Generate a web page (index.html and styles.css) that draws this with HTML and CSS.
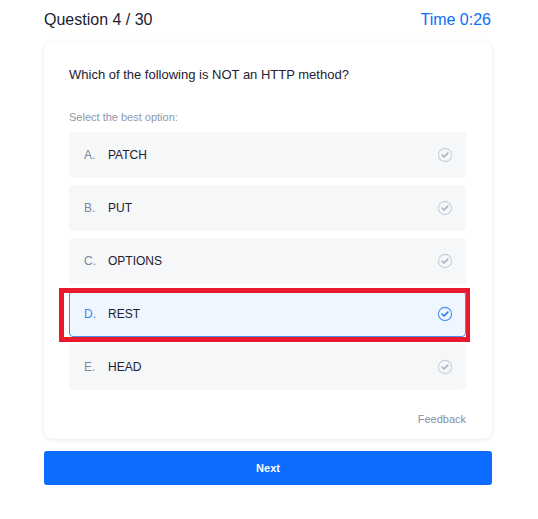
FILE: index.html
```html
<!DOCTYPE html>
<html>
<head>
<meta charset="utf-8">
<link rel="stylesheet" href="styles.css">
</head>
<body>
<div class="page">
  <div class="header">
    <span class="qnum">Question 4 / 30</span>
    <span class="timer">Time 0:26</span>
  </div>
  <div class="card">
    <div class="question">Which of the following is NOT an HTTP method?</div>
    <div class="hint">Select the best option:</div>
    <div class="options">
      <div class="option"><span class="letter">A.</span><span class="label">PATCH</span><svg class="check" viewBox="0 0 16 16"><circle cx="8" cy="8" r="6.6"/><path d="M5.2 8.2 L7.1 10 L10.8 6.2"/></svg></div>
      <div class="option"><span class="letter">B.</span><span class="label">PUT</span><svg class="check" viewBox="0 0 16 16"><circle cx="8" cy="8" r="6.6"/><path d="M5.2 8.2 L7.1 10 L10.8 6.2"/></svg></div>
      <div class="option"><span class="letter">C.</span><span class="label">OPTIONS</span><svg class="check" viewBox="0 0 16 16"><circle cx="8" cy="8" r="6.6"/><path d="M5.2 8.2 L7.1 10 L10.8 6.2"/></svg></div>
      <div class="option selected"><span class="letter">D.</span><span class="label">REST</span><svg class="check" viewBox="0 0 16 16"><circle cx="8" cy="8" r="6.6"/><path d="M5.2 8.2 L7.1 10 L10.8 6.2"/></svg><div class="highlight"></div></div>
      <div class="option"><span class="letter">E.</span><span class="label">HEAD</span><svg class="check" viewBox="0 0 16 16"><circle cx="8" cy="8" r="6.6"/><path d="M5.2 8.2 L7.1 10 L10.8 6.2"/></svg></div>
    </div>
    <div class="feedback">Feedback</div>
  </div>
  <button class="next">Next</button>
</div>
</body>
</html>
```
FILE: styles.css
```css
* { box-sizing: border-box; }
html, body { margin: 0; padding: 0; background: #fff; }
body { font-family: "Liberation Sans", Arial, sans-serif; color: #1d2131; }
.page { width: 448px; margin-left: 44px; padding-top: 10px; }
.header { display: flex; justify-content: space-between; align-items: center; height: 20px; font-size: 16px; line-height: 20px; }
.qnum { color: #1d2131; }
.timer { color: #0d6efd; margin-right: 1px; }
.card { margin-top: 12px; background: #fff; border-radius: 8px; box-shadow: 0 1px 4px rgba(0,0,0,0.09), 0 0 1px rgba(0,0,0,0.06); padding: 25px 26px 13px 25px; }
.question { font-size: 13px; line-height: 16px; color: #1d2131; }
.hint { margin-top: 28px; font-size: 11px; line-height: 13px; color: #8d98ad; }
.options { margin-top: 8px; display: flex; flex-direction: column; gap: 7px; }
.option { position: relative; display: flex; align-items: center; height: 46px; background: #f6f7f9; border-radius: 4px; padding: 0 13px 0 15px; font-size: 12px; }
.letter { width: 24px; color: #7d879a; font-size: 12px; }
.label { flex: 1; color: #1d2131; }
.check { width: 16px; height: 16px; fill: none; stroke: #c7cfdc; stroke-width: 1.1; }
.check path { stroke: #a9b4c6; stroke-width: 1.7; stroke-linecap: round; stroke-linejoin: round; }
.option.selected { background: #eff6ff; border: 1px solid #4a8fe8; padding-left: 14px; padding-right: 12px; }
.option.selected .letter { color: #3b86f2; }
.option.selected .check { stroke: #4a90ee; }
.option.selected .check path { stroke: #2f7fef; }
.highlight { position: absolute; left: -11px; top: -4px; right: -5px; bottom: -6px; border: 5px solid #e8192c; border-right-width: 4px; pointer-events: none; }
.feedback { margin-top: 23px; text-align: right; font-size: 11px; line-height: 13px; color: #8390a8; }
.next { display: block; width: 448px; height: 34px; margin-top: 12px; border: none; border-radius: 3px; background: #0b6cff; color: #fff; font-family: "Liberation Sans", Arial, sans-serif; font-weight: bold; font-size: 11px; }
```
